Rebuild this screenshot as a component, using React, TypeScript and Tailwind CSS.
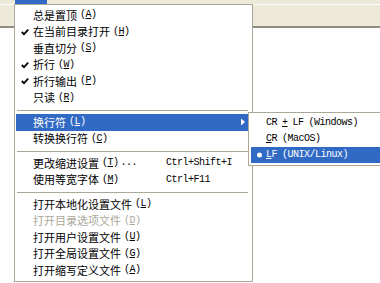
import React from 'react';

type Entry =
  | { kind: 'sep' }
  | {
      kind: 'item';
      label: string;
      key: string;
      tail?: string;
      checked?: boolean;
      active?: boolean;
      disabled?: boolean;
      submenu?: boolean;
      shortcut?: string;
    };

const cjk = { fontFamily: '"Noto Sans CJK SC", "Noto Sans", sans-serif' };
const mono = { fontFamily: '"Liberation Mono", "Noto Sans CJK SC", monospace' };

const entries: Entry[] = [
  { kind: 'item', label: '总是置顶', key: 'A' },
  { kind: 'item', label: '在当前目录打开', key: 'H', checked: true },
  { kind: 'item', label: '垂直切分', key: 'S' },
  { kind: 'item', label: '折行', key: 'W', checked: true },
  { kind: 'item', label: '折行输出', key: 'P', checked: true },
  { kind: 'item', label: '只读', key: 'R' },
  { kind: 'sep' },
  { kind: 'item', label: '换行符', key: 'L', active: true, submenu: true },
  { kind: 'item', label: '转换换行符', key: 'C' },
  { kind: 'sep' },
  { kind: 'item', label: '更改缩进设置', key: 'T', tail: '...', shortcut: 'Ctrl+Shift+I' },
  { kind: 'item', label: '使用等宽字体', key: 'M', shortcut: 'Ctrl+F11' },
  { kind: 'sep' },
  { kind: 'item', label: '打开本地化设置文件', key: 'L' },
  { kind: 'item', label: '打开目录选项文件', key: 'D', disabled: true },
  { kind: 'item', label: '打开用户设置文件', key: 'U' },
  { kind: 'item', label: '打开全局设置文件', key: 'G' },
  { kind: 'item', label: '打开缩写定义文件', key: 'A' },
];

function Check() {
  return (
    <svg width="8" height="8" viewBox="0 0 8 8" className="absolute left-[5px] top-1/2 -translate-y-1/2">
      <path d="M0.8 4 L3 6.2 L7.2 1.6" fill="none" stroke="#000" strokeWidth="1.8" />
    </svg>
  );
}

function MenuRow({ e }: { e: Extract<Entry, { kind: 'item' }> }) {
  const color = e.active ? 'text-white' : e.disabled ? 'text-[#aca899]' : 'text-black';
  return (
    <div
      className={`relative flex items-center h-[16.5px] ml-[1px] mr-[3px] pl-[17px] ${
        e.active ? 'bg-[#316ac5]' : ''
      } ${color}`}
    >
      {e.checked && <Check />}
      <div className="w-[133px] shrink-0 flex items-center whitespace-nowrap">
        <span className="text-[11px] leading-none" style={cjk}>
          {e.label}
        </span>
        <span className="ml-[3px] text-[10px] tracking-[-0.5px] leading-none" style={mono}>
          (<span className="underline">{e.key}</span>){e.tail && <span className="ml-[2px]">{e.tail}</span>}
        </span>
      </div>
      {e.shortcut && (
        <span className="text-[10px] tracking-[-0.5px] leading-none whitespace-nowrap" style={mono}>
          {e.shortcut}
        </span>
      )}
      {e.submenu && (
        <svg width="4" height="7" viewBox="0 0 4 7" className="absolute right-[4px] top-1/2 -translate-y-1/2">
          <path d="M0 0 L4 3.5 L0 7 Z" fill="#fff" />
        </svg>
      )}
    </div>
  );
}

function SubRow({ children, active }: { children: React.ReactNode; active?: boolean }) {
  return (
    <div
      className={`relative flex items-center h-[16px] ml-[2px] pl-[15px] text-[10px] tracking-[-0.5px] leading-none whitespace-nowrap ${
        active ? 'bg-[#316ac5] text-white' : 'text-black'
      }`}
      style={mono}
    >
      {active && <span className="absolute left-[6px] top-1/2 -translate-y-1/2 w-[5px] h-[5px] rounded-full bg-white" />}
      {children}
    </div>
  );
}

export default function App() {
  return (
    <div className="relative w-[380px] h-[283px] overflow-hidden bg-white">
      {/* menu bar, mostly scrolled off the top */}
      <div className="h-[4px] bg-[#ece9d8] flex overflow-hidden">
        <div className="ml-[15px] w-[32px] h-full bg-[#316ac5]" />
      </div>
      {/* toolbar */}
      <div className="h-[24px] bg-[#ece9d8] border-t border-white border-b-2 border-b-[#8f8d80]" />

      {/* main menu */}
      <div className="absolute left-[14px] top-[4px] w-[239px] bg-white border border-[#aca899] pt-[2px] pb-[2px]">
        {entries.map((e, i) =>
          e.kind === 'sep' ? (
            <div key={i} className="h-[8px] flex items-center ml-[2px] mr-[4px]">
              <div className="h-px w-full bg-[#aca899]" />
            </div>
          ) : (
            <MenuRow key={i} e={e} />
          ),
        )}
      </div>

      {/* submenu */}
      <div className="absolute left-[248px] top-[112px] w-[150px] bg-white border border-[#aca899] pt-[2px] pb-[2px]">
        <SubRow>
          CR <span className="underline mx-[5px]">+</span> LF <span className="ml-[5px]">(Windows)</span>
        </SubRow>
        <SubRow>
          <span className="underline">C</span>R <span className="ml-[5px]">(MacOS)</span>
        </SubRow>
        <SubRow active>
          <span className="underline">L</span>F <span className="ml-[5px]">(UNIX/Linux)</span>
        </SubRow>
      </div>
    </div>
  );
}
